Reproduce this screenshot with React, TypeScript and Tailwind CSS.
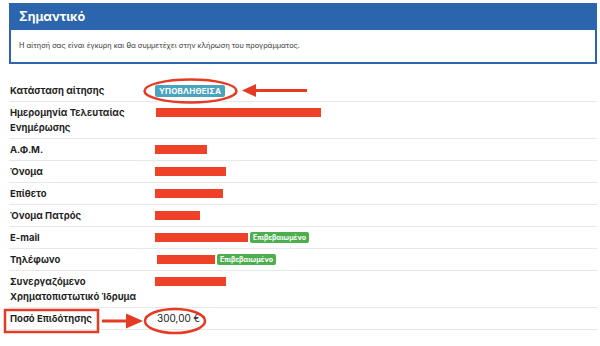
import React from 'react';

type Row = {
  label: string[];
  bar?: number;
  barOffset?: number;
  badge?: 'status' | 'verified';
  text?: string;
};

const rows: Row[] = [
  { label: ['Κατάσταση αίτησης'], badge: 'status' },
  { label: ['Ημερομηνία Τελευταίας', 'Ενημέρωσης'], bar: 165, barOffset: 1 },
  { label: ['Α.Φ.Μ.'], bar: 52 },
  { label: ['Όνομα'], bar: 71 },
  { label: ['Επίθετο'], bar: 68 },
  { label: ['Όνομα Πατρός'], bar: 45 },
  { label: ['E-mail'], bar: 93, badge: 'verified' },
  { label: ['Τηλέφωνο'], bar: 58, barOffset: 2, badge: 'verified' },
  { label: ['Συνεργαζόμενο', 'Χρηματοπιστωτικό Ίδρυμα'], bar: 71 },
  { label: ['Ποσό Επιδότησης'], text: '300,00 €' },
];

const App: React.FC = () => {
  return (
    <div
      className="relative w-[600px] h-[346px] bg-white overflow-hidden text-[#222]"
      style={{ fontFamily: 'Inter, "Noto Sans", "DejaVu Sans", sans-serif' }}
    >
      {/* notice panel */}
      <div className="ml-[9px] mt-[3px] w-[588px] border-2 border-[#2a65ad]">
        <div className="bg-[#2a65ad] h-[25px] flex items-center pl-[8px]">
          <h2 className="text-white text-[12.5px] font-bold leading-none">Σημαντικό</h2>
        </div>
        <div className="h-[32px] flex items-center pl-[8px] bg-white">
          <p className="text-[7.3px] text-[#333]">
            Η αίτησή σας είναι έγκυρη και θα συμμετέχει στην κλήρωση του προγράμματος.
          </p>
        </div>
      </div>

      {/* details table */}
      <div className="ml-[9px] mt-[16px] w-[588px]">
        {rows.map((row, i) => (
          <div key={i} className="flex items-start py-[3px] border-b border-[#e8e8e8]">
            <div className="w-[146px] shrink-0 pl-px text-[9.5px] font-bold leading-[15px] text-[#1f1f1f]">
              {row.label.map((l, j) => (
                <div key={j}>{l}</div>
              ))}
            </div>
            <div className="flex items-center h-[15px] gap-[2px]">
              {row.badge === 'status' && (
                <span className="bg-[#4aa4bf] text-white text-[8px] font-bold leading-none px-[4px] py-[2px] rounded-[2px] tracking-[0.2px]">
                  ΥΠΟΒΛΗΘΕΙΣΑ
                </span>
              )}
              {row.bar && (
                <span
                  className="block h-[9px] bg-[#ee4128]"
                  style={{ width: row.bar, marginLeft: row.barOffset ?? 0 }}
                />
              )}
              {row.badge === 'verified' && (
                <span className="bg-[#4cae4f] text-white text-[7px] font-bold leading-none px-[3px] py-[2px] rounded-[2px]">
                  Επιβεβαιωμένο
                </span>
              )}
              {row.text && <span className="ml-[2px] text-[10px] text-[#222]">{row.text}</span>}
            </div>
          </div>
        ))}
      </div>

      {/* annotations */}
      <svg className="absolute inset-0 pointer-events-none" width="600" height="346" viewBox="0 0 600 346">
        <ellipse cx="190.5" cy="91" rx="46" ry="11.5" fill="none" stroke="#e53a24" strokeWidth="2.5" />
        <line x1="253" y1="90.5" x2="307" y2="90.5" stroke="#e53a24" strokeWidth="3" />
        <polygon points="242,90.5 256,84 256,97" fill="#e53a24" />

        <rect x="5" y="310" width="93" height="22" fill="none" stroke="#e53a24" strokeWidth="2.5" />
        <line x1="102" y1="321" x2="128" y2="321" stroke="#e53a24" strokeWidth="3" />
        <polygon points="143,321 126,313.5 126,328.5" fill="#e53a24" />
        <ellipse cx="175" cy="321" rx="30" ry="12" fill="none" stroke="#e53a24" strokeWidth="2.5" />
      </svg>
    </div>
  );
};

export default App;
